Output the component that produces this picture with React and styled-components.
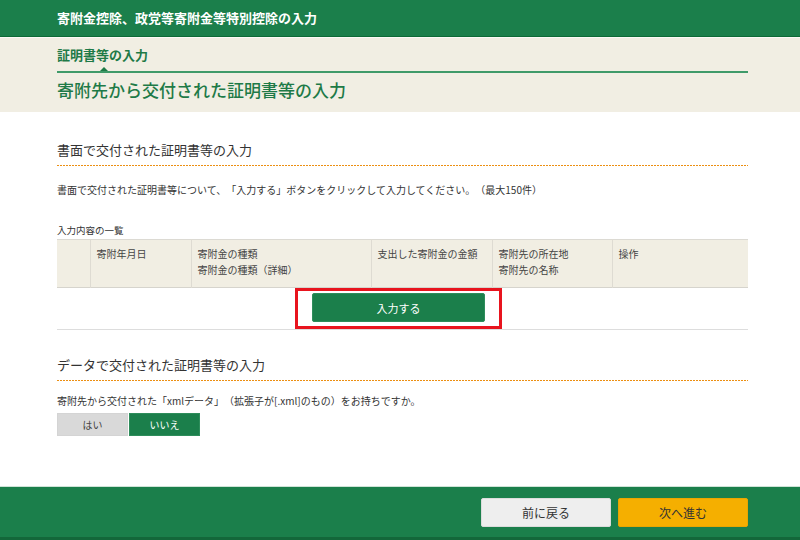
import React from "react";
import styled, { createGlobalStyle } from "styled-components";

const GlobalStyle = createGlobalStyle`
  html, body {
    margin: 0;
    padding: 0;
    background: #ffffff;
  }
  body {
    font-family: "Noto Sans CJK JP", "Noto Sans", sans-serif;
    color: #333333;
    text-spacing-trim: space-all;
  }
  * {
    box-sizing: border-box;
  }
`;

const green = "#1b7f4b";
const beige = "#f1eee3";

const Page = styled.div`
  display: flex;
  flex-direction: column;
  width: 800px;
  height: 540px;
  overflow: hidden;
`;

const TopBar = styled.header`
  height: 37px;
  flex: none;
  display: flex;
  align-items: center;
  padding: 0 0 1px 57px;
  background: ${green};
  border-bottom: 1px solid #0d6a36;
  color: #ffffff;
  font-size: 13px;
  font-weight: 700;
`;

const TitleBand = styled.div`
  flex: none;
  height: 75px;
  padding: 8px 52px 0 57px;
  background: ${beige};
  border-top: 1px solid #fbfaf5;
`;

const StepLabel = styled.div`
  font-size: 13px;
  line-height: 18px;
  font-weight: 700;
  color: #1e7a47;
`;

const StepLine = styled.div`
  position: relative;
  height: 2px;
  margin-top: 7px;
  background: #3f9a69;

  &::after {
    content: "";
    position: absolute;
    left: 43px;
    top: -4px;
    border-left: 4px solid transparent;
    border-right: 4px solid transparent;
    border-bottom: 4px solid #1e7a47;
  }
`;

const PageTitle = styled.h1`
  margin: 5px 0 0 0;
  font-size: 17px;
  line-height: 24px;
  font-weight: 500;
  color: #1e7a47;
`;

const Main = styled.main`
  flex: 1;
  padding: 0 52px 0 57px;
`;

const SectionHeading = styled.h2`
  margin: ${props => props.$top}px 0 0 0;
  padding-bottom: 6px;
  font-size: 13px;
  line-height: 20px;
  font-weight: 400;
  color: #333333;
  background-image: repeating-linear-gradient(
    to right,
    #ec8f12 0,
    #ec8f12 2px,
    transparent 2px,
    transparent 3px
  );
  background-size: 100% 1px;
  background-position: left bottom;
  background-repeat: no-repeat;
`;

const Note = styled.p`
  margin: ${props => props.$top}px 0 0 0;
  font-size: 10px;
  line-height: 16px;
  color: #333333;
`;

const Caption = styled.div`
  margin-top: 24px;
  font-size: 9.5px;
  line-height: 16px;
  color: #333333;
`;

const ListTable = styled.table`
  width: 100%;
  margin-top: 1px;
  border-collapse: collapse;
  table-layout: fixed;
`;

const HeadRow = styled.tr`
  background: ${beige};
  border-top: 1px solid #dcdad3;
  border-bottom: 1px solid #d6d4cd;
`;

const HeadCell = styled.th`
  width: ${props => props.$w}px;
  height: 48px;
  padding: 6px 6px 0 6px;
  vertical-align: top;
  text-align: left;
  font-size: 10px;
  line-height: 16px;
  font-weight: 400;
  color: #444444;
  border-left: 1px solid #dedbd2;

  &:first-child {
    border-left: none;
  }
`;

const BodyRow = styled.tr`
  border-bottom: 1px solid #dddddd;
`;

const ButtonCell = styled.td`
  height: 40px;
  padding: 0 0 0 238px;
  vertical-align: top;
`;

const Highlight = styled.div`
  display: inline-flex;
  padding: 2px 14px 4px 14px;
  border: 3px solid #e8141e;
`;

const PrimaryButton = styled.button`
  width: 173px;
  height: 29px;
  border: 1px solid #2e8d5b;
  border-radius: 2px;
  background: ${green};
  color: #ffffff;
  font-family: inherit;
  font-size: 11px;
`;

const ToggleGroup = styled.div`
  display: flex;
  gap: 1px;
  margin-top: 4px;
`;

const ToggleButton = styled.button`
  width: 71px;
  height: 23px;
  border: 1px solid ${props => (props.$active ? "#2e8d5b" : "#d4d4d4")};
  background: ${props => (props.$active ? green : "#d9d9d9")};
  color: ${props => (props.$active ? "#ffffff" : "#444444")};
  font-family: inherit;
  font-size: 10px;
`;

const Footer = styled.footer`
  flex: none;
  height: 54px;
  display: flex;
  justify-content: flex-end;
  align-items: flex-start;
  gap: 7px;
  padding: 11px 52px 0 0;
  background: ${green};
  border-top: 1px solid #cfe3d7;
  border-bottom: 3px solid #13673a;
`;

const NavButton = styled.button`
  width: 130px;
  height: 29px;
  border: 1px solid ${props => (props.$next ? "#eaa500" : "#dcdcdc")};
  border-radius: 2px;
  background: ${props => (props.$next ? "#f5af00" : "#eeeeee")};
  color: #333333;
  font-family: inherit;
  font-size: 12px;
`;

const columns = [
  { w: 33, lines: [] },
  { w: 101, lines: ["寄附年月日"] },
  { w: 180, lines: ["寄附金の種類", "寄附金の種類（詳細）"] },
  { w: 121, lines: ["支出した寄附金の金額"] },
  { w: 120, lines: ["寄附先の所在地", "寄附先の名称"] },
  { w: 136, lines: ["操作"] },
];

const App = () => (
  <Page>
    <GlobalStyle />
    <TopBar>寄附金控除、政党等寄附金等特別控除の入力</TopBar>
    <TitleBand>
      <StepLabel>証明書等の入力</StepLabel>
      <StepLine />
      <PageTitle>寄附先から交付された証明書等の入力</PageTitle>
    </TitleBand>
    <Main>
      <SectionHeading $top={28}>書面で交付された証明書等の入力</SectionHeading>
      <Note $top={16}>
        書面で交付された証明書等について、「入力する」ボタンをクリックして入力してください。（最大150件）
      </Note>
      <Caption>入力内容の一覧</Caption>
      <ListTable>
        <thead>
          <HeadRow>
            {columns.map((col, i) => (
              <HeadCell key={i} $w={col.w}>
                {col.lines.map(line => (
                  <div key={line}>{line}</div>
                ))}
              </HeadCell>
            ))}
          </HeadRow>
        </thead>
        <tbody>
          <BodyRow>
            <ButtonCell colSpan={6}>
              <Highlight>
                <PrimaryButton>入力する</PrimaryButton>
              </Highlight>
            </ButtonCell>
          </BodyRow>
        </tbody>
      </ListTable>
      <SectionHeading $top={25}>データで交付された証明書等の入力</SectionHeading>
      <Note $top={12}>
        寄附先から交付された「xmlデータ」（拡張子が[.xml]のもの）をお持ちですか。
      </Note>
      <ToggleGroup>
        <ToggleButton>はい</ToggleButton>
        <ToggleButton $active>いいえ</ToggleButton>
      </ToggleGroup>
    </Main>
    <Footer>
      <NavButton>前に戻る</NavButton>
      <NavButton $next>次へ進む</NavButton>
    </Footer>
  </Page>
);

export default App;
